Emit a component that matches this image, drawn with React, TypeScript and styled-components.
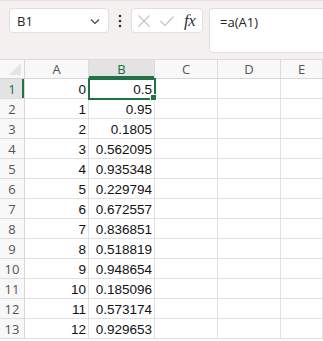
import React from "react";
import styled, { createGlobalStyle } from "styled-components";

const GlobalStyle = createGlobalStyle`
  html, body {
    margin: 0;
    padding: 0;
    background: #ffffff;
    overflow: hidden;
  }
`;

const Page = styled.div`
  width: 323px;
  height: 341px;
  display: flex;
  flex-direction: column;
  font-family: "Liberation Sans", Arial, sans-serif;
`;

// formula bar strip on top
const FormulaBar = styled.div`
  height: 59px;
  background: #f4f0f0;
  border-top: 1px solid #e6e1e1;
  box-sizing: border-box;
  display: flex;
  align-items: flex-start;
  padding: 7px 0 0 9px;
`;

const NameBox = styled.div`
  width: 100px;
  height: 25px;
  box-sizing: border-box;
  background: #fff;
  border: 1px solid #e3dfdf;
  border-radius: 4px;
  display: flex;
  align-items: center;
  justify-content: space-between;
  padding: 0 7px 0 7px;
  font-family: "Open Sans", "Noto Sans", sans-serif;
  font-size: 13px;
  color: #242424;
`;

const Dots = styled.div`
  width: 22px;
  height: 25px;
  display: flex;
  align-items: center;
  justify-content: center;
`;

const ButtonBox = styled.div`
  width: 72px;
  height: 25px;
  box-sizing: border-box;
  background: #fff;
  border: 1px solid #e3dfdf;
  border-radius: 4px;
  display: flex;
  align-items: center;
  padding: 0 0 0 5px;
  gap: 8px;
`;

const Fx = styled.span`
  font-family: "Liberation Serif", "Times New Roman", serif;
  font-style: italic;
  font-size: 17px;
  color: #333;
  margin-left: 1px;
  letter-spacing: -0.5px;
`;

const FormulaInput = styled.div`
  margin-left: 6px;
  flex: 1;
  height: 45px;
  box-sizing: border-box;
  background: #fff;
  border: 1px solid #e3dfdf;
  border-right: none;
  border-radius: 4px 0 0 4px;
  padding: 4px 0 0 10px;
  font-family: "Open Sans", "Noto Sans", sans-serif;
  font-size: 13px;
  color: #242424;
`;

const Sheet = styled.div`
  flex: 1;
  display: grid;
  grid-template-columns: 25px 64px 66px 63px 63px 1fr;
  grid-template-rows: 19px repeat(13, 20px);
  border-top: 1px solid #dcdcdc;
  overflow: hidden;
`;

const Corner = styled.div`
  background: #f8f8f8;
  border-right: 1px solid #d6d6d6;
  border-bottom: 1px solid #d6d6d6;
  position: relative;
  &::after {
    content: "";
    position: absolute;
    right: 3px;
    bottom: 3px;
    border-left: 12px solid transparent;
    border-bottom: 12px solid #e4e4e4;
  }
`;

const ColHead = styled.div<{ $active?: boolean }>`
  background: ${(p) => (p.$active ? "#e3e3e3" : "#f8f8f8")};
  border-right: 1px solid #dcdcdc;
  border-bottom: 1px solid #d6d6d6;
  box-shadow: ${(p) => (p.$active ? "inset 0 -2px 0 #217346" : "none")};
  display: flex;
  align-items: center;
  justify-content: center;
  font-family: "Open Sans", "Noto Sans", sans-serif;
  font-size: 13px;
  color: ${(p) => (p.$active ? "#1d6b3f" : "#555")};
`;

const RowHead = styled.div<{ $active?: boolean }>`
  background: ${(p) => (p.$active ? "#e3e3e3" : "#f8f8f8")};
  border-right: 1px solid #d6d6d6;
  border-bottom: 1px solid #dcdcdc;
  box-shadow: ${(p) => (p.$active ? "inset -2px 0 0 #217346" : "none")};
  display: flex;
  align-items: center;
  justify-content: center;
  font-family: "Open Sans", "Noto Sans", sans-serif;
  font-size: 13px;
  color: ${(p) => (p.$active ? "#1d6b3f" : "#555")};
`;

const Cell = styled.div<{ $selected?: boolean }>`
  position: relative;
  border-right: 1px solid #e1e1e1;
  border-bottom: 1px solid #e1e1e1;
  display: flex;
  align-items: center;
  justify-content: flex-end;
  padding: 2px 2px 0 0;
  font-size: 13.5px;
  color: #111;
  ${(p) =>
    p.$selected &&
    `
    outline: 2px solid #217346;
    outline-offset: -1px;
    z-index: 1;
  `}
`;

const FillHandle = styled.span`
  position: absolute;
  right: -3px;
  bottom: -3px;
  width: 5px;
  height: 5px;
  background: #217346;
  border: 1px solid #fff;
`;

const values = [
  "0.5",
  "0.95",
  "0.1805",
  "0.562095",
  "0.935348",
  "0.229794",
  "0.672557",
  "0.836851",
  "0.518819",
  "0.948654",
  "0.185096",
  "0.573174",
  "0.929653",
];

const cols = ["A", "B", "C", "D", "E"];

const App: React.FC = () => {
  return (
    <Page>
      <GlobalStyle />
      <FormulaBar>
        <NameBox>
          <span>B1</span>
          <svg width="12" height="12" viewBox="0 0 12 12">
            <path d="M2 4.5 L6 8.5 L10 4.5" fill="none" stroke="#444" strokeWidth="1.2" />
          </svg>
        </NameBox>
        <Dots>
          <svg width="4" height="14" viewBox="0 0 4 14">
            <circle cx="2" cy="2" r="1.3" fill="#333" />
            <circle cx="2" cy="7" r="1.3" fill="#333" />
            <circle cx="2" cy="12" r="1.3" fill="#333" />
          </svg>
        </Dots>
        <ButtonBox>
          <svg width="14" height="14" viewBox="0 0 14 14">
            <path d="M1.5 1.5 L12.5 12.5 M12.5 1.5 L1.5 12.5" stroke="#c4c4c4" strokeWidth="1.2" fill="none" />
          </svg>
          <svg width="16" height="14" viewBox="0 0 16 14">
            <path d="M1.5 7 L6 11.5 L14.5 2.5" stroke="#c4c4c4" strokeWidth="1.2" fill="none" />
          </svg>
          <Fx>fx</Fx>
        </ButtonBox>
        <FormulaInput>=a(A1)</FormulaInput>
      </FormulaBar>
      <Sheet>
        <Corner />
        {cols.map((c) => (
          <ColHead key={c} $active={c === "B"}>
            {c}
          </ColHead>
        ))}
        {values.map((v, i) => (
          <React.Fragment key={i}>
            <RowHead $active={i === 0}>{i + 1}</RowHead>
            <Cell>{i}</Cell>
            <Cell $selected={i === 0}>
              {v}
              {i === 0 && <FillHandle />}
            </Cell>
            <Cell />
            <Cell />
            <Cell />
          </React.Fragment>
        ))}
      </Sheet>
    </Page>
  );
};

export default App;
